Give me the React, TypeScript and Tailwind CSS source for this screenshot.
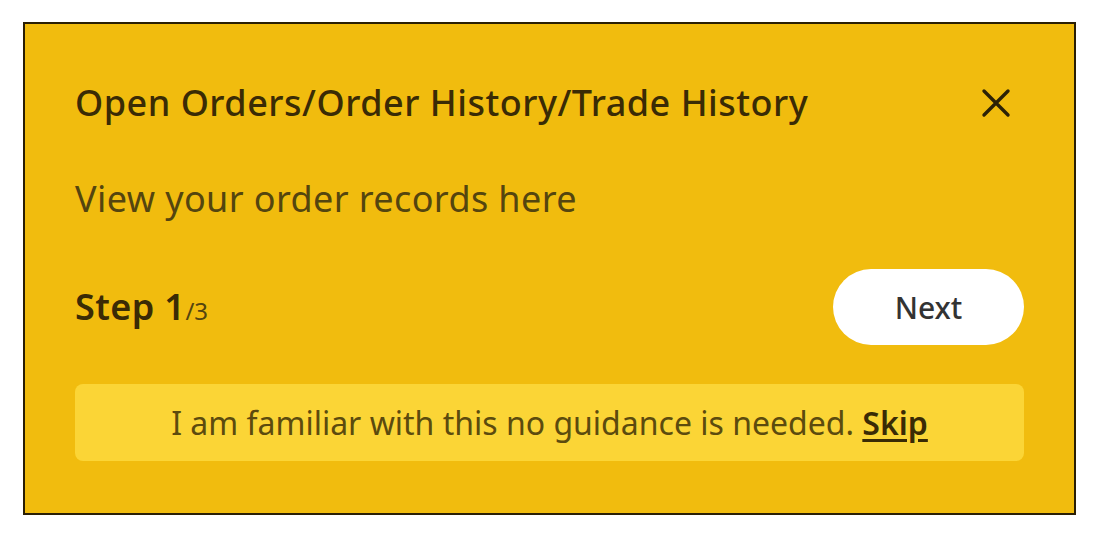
export default function App() {
  return (
    <div className="w-[1096px] h-[536px] bg-white pl-[23px] pt-[22px]" style={{ fontFamily: '"Noto Sans", sans-serif' }}>
      <div className="w-[1053px] h-[493px] bg-[#f1bc0e] border-2 border-[#2a1f05] flex flex-col pl-[50px] pr-[50px]">
        {/* Header */}
        <div className="flex items-center justify-between mt-[58px] h-[42px]">
          <h1 className="text-[36px] font-medium text-[#3a2b05] leading-none tracking-[0.5px]">
            Open Orders/Order History/Trade History
          </h1>
          <button className="w-[40px] h-[40px] flex items-center justify-center mr-[8px]">
            <svg width="32" height="32" viewBox="0 0 32 32" fill="none" stroke="#2d2206" strokeWidth="3.4" strokeLinecap="round">
              <path d="M4 4 L28 28 M28 4 L4 28" />
            </svg>
          </button>
        </div>

        <p className="mt-[57px] text-[36px] text-[#54450f] leading-none tracking-[0.4px]">View your order records here</p>

        {/* Step row */}
        <div className="flex items-center justify-between mt-[52px] h-[76px]">
          <div className="flex items-baseline text-[#3a2b05]">
            <span className="text-[36px] font-semibold leading-none tracking-[0.4px]">Step 1</span>
            <span className="text-[24px] text-[#54450f] leading-none">/3</span>
          </div>
          <button className="w-[191px] h-[76px] rounded-full bg-white text-[30px] font-medium text-[#333333]">
            Next
          </button>
        </div>

        {/* Skip */}
        <div className="mt-[39px] h-[77px] rounded-[8px] bg-[#fbd536] flex items-center justify-center text-[32px] text-[#5c4b0e]">
          <span>I am familiar with this no guidance is needed.&nbsp;</span>
          <a className="font-semibold text-[#3a2b05] underline underline-offset-[4px]">Skip</a>
        </div>
      </div>
    </div>
  );
}
